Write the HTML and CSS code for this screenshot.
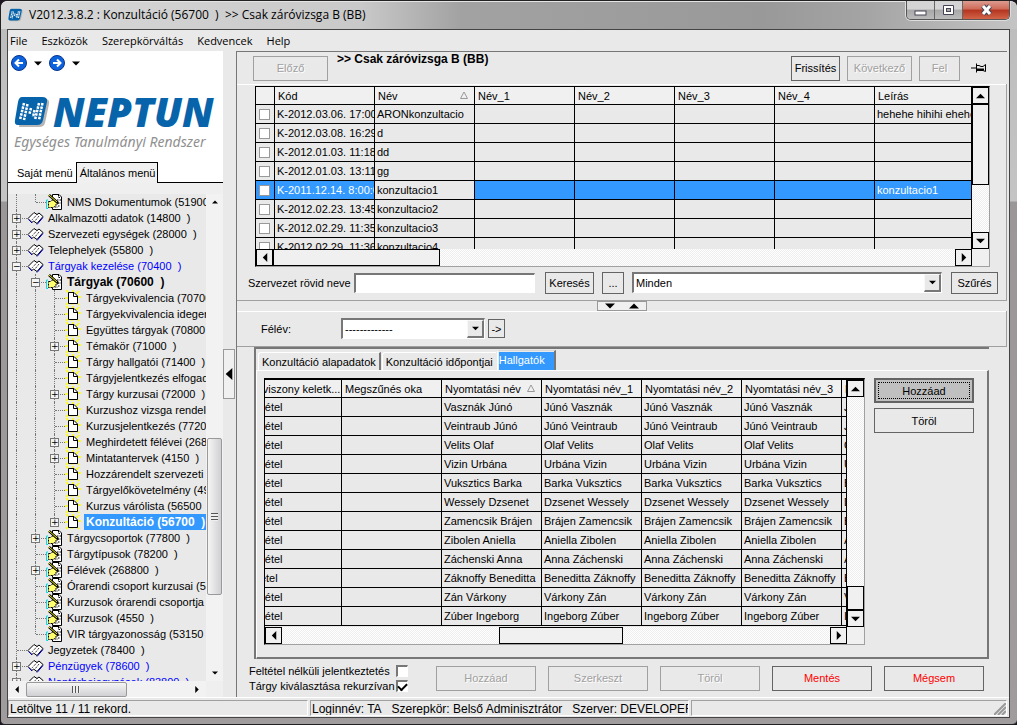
FILE: index.html
```html
<!DOCTYPE html>
<html lang="hu">
<head>
<meta charset="utf-8">
<title>V2012.3.8.2 : Konzultáció (56700)</title>
<link rel="stylesheet" href="styles.css">
</head>
<body>
<svg class="defs" aria-hidden="true">
  <symbol id="book" viewBox="0 0 17 16"><path d="M1 8.500L7 2.500L10 4.500L12 3L16 6.500L10 13.500L6.500 11L5 12.500Z" fill="#fff" stroke="#000"/><path d="M10 4.500L4.500 10.500M12 6L8 11" stroke="#000" stroke-dasharray="1 1" fill="none"/><path d="M1.500 9.500L5 13M10 14.500L16 7.500" fill="none" stroke="#0000d0"/></symbol>
  <symbol id="page" viewBox="0 0 17 16"><path d="M1 0L4 3M8 0V2M14 1L11 4M0 8H3M16 7H12M1 15L4 12M14 15L11 12M7 15V13" stroke="#ff0" stroke-width="1.500"/><path d="M3.500 2.500H9L12.500 6V13.500H3.500Z" fill="#fff" stroke="#000"/><path d="M8.500 2.500V6.500H12.500" fill="none" stroke="#000"/></symbol>
  <symbol id="form" viewBox="0 0 17 16"><path d="M6.500 0.500H13L15.500 3V15.500H6.500Z" fill="#fff" stroke="#000"/><path d="M12.500 1V3.500H15M11 6H15M12 9H15M9 13H12M12 12H14" fill="none" stroke="#000" stroke-dasharray="1.500 1"/><path d="M2.500 7.500H5L7 5.500L10 8H12V10H10V12L7 13.500H2.500Z" fill="#ffff70" stroke="#000" stroke-dasharray="2 1"/><path d="M3 9H9V12H3Z" fill="#ffff70"/><path d="M2 6H0.500V14.500H2" fill="none" stroke="#0dd"/><path d="M3 1L12 9" stroke="#000" stroke-width="2.500"/><path d="M3 1L11 8" stroke="#ee0"/></symbol>
  <symbol id="up" viewBox="0 0 10 6"><path d="M0 5.500L5 0.500L10 5.500Z"/></symbol>
  <symbol id="down" viewBox="0 0 10 6"><path d="M0 0.500H10L5 5.500Z"/></symbol>
  <symbol id="left" viewBox="0 0 6 10"><path d="M5.500 0V10L0.500 5Z"/></symbol>
  <symbol id="right" viewBox="0 0 6 10"><path d="M0.500 0V10L5.500 5Z"/></symbol>
  <symbol id="sort" viewBox="0 0 8 9"><path d="M0.500 7.500L4 1L7.500 7.500Z" fill="none" stroke="#999"/></symbol>
  <symbol id="neptun" viewBox="0 0 36 32"><path d="M10 3H31Q36 3 35 8L31 27Q30 31 25 31H5Z" fill="#b5b5b5"/><path d="M8 1H28Q34 1 33 6L29 24Q28 29 23 29H4Q0 29 1 24L4 6Q5 1 8 1Z" fill="#0864aa"/><path d="M10 7L6 24M13.500 8L10 24M17 12L15.500 18M20.500 14L19 21M25 7L21 24M28.500 7L25 24" stroke="#fff" stroke-width="2.500" stroke-dasharray="2.500 1"/></symbol>
</svg>

<header class="titlebar">
  <svg class="appicon" viewBox="0 0 36 32"><use href="#neptun"/></svg>
  <span class="caption">V2012.3.8.2 : Konzultáció (56700&nbsp; )&nbsp; &gt;&gt; Csak záróvizsga B (BB)</span>
  <div class="winbtns">
    <button aria-label="Kis méret"><svg width="13" height="13"><rect x="1" y="7" width="11" height="4" fill="#fff" stroke="#444455"/></svg></button>
    <button aria-label="Teljes méret"><svg width="13" height="13"><path d="M1.500 1.500H11.500V10.500H1.500Z" fill="#fff" stroke="#444455"/><rect x="4.500" y="4.500" width="4" height="3" fill="#aaa" stroke="#444455"/></svg></button>
    <button class="close" aria-label="Bezárás"><svg width="13" height="12"><path d="M3 2L10 10M10 2L3 10" stroke="#445" stroke-width="5"/><path d="M3 2L10 10M10 2L3 10" stroke="#fff" stroke-width="3"/></svg></button>
  </div>
</header>

<div class="client">
  <nav class="menubar"><button>File</button><button>Eszközök</button><button>Szerepkörváltás</button><button>Kedvencek</button><button>Help</button></nav>

  <div class="main">
    <aside class="side">
      <div class="brand">
        <div class="history">
          <button aria-label="Vissza"><svg width="16" height="16"><circle cx="8" cy="8" r="7.500" fill="#0c62dc" stroke="#08348c"/><path d="M12 8H5M8 4.500L4.500 8L8 11.500" fill="none" stroke="#fff" stroke-width="2"/></svg></button>
          <svg class="drop"><use href="#down"/></svg>
          <button aria-label="Előre"><svg width="16" height="16"><circle cx="8" cy="8" r="7.500" fill="#0c62dc" stroke="#08348c"/><path d="M4 8H11M8 4.500L11.500 8L8 11.500" fill="none" stroke="#fff" stroke-width="2"/></svg></button>
          <svg class="drop"><use href="#down"/></svg>
        </div>
        <div class="logo"><svg width="36" height="32"><use href="#neptun"/></svg><span>NEPTUN</span></div>
        <div class="tagline">Egységes Tanulmányi Rendszer</div>
        <div class="sidetabs"><button>Saját menü</button><button class="on">Általános menü</button><i></i></div>
      </div>
      <div class="treebox">
        <div class="tree">
          <div class="n"><i class="v"></i><i class="l"></i><svg><use href="#form"/></svg><span>NMS Dokumentumok (51900&nbsp; )</span></div>
          <div class="n"><i class="t"><button>+</button></i><svg><use href="#book"/></svg><span>Alkalmazotti adatok (14800&nbsp; )</span></div>
          <div class="n"><i class="t"><button>+</button></i><svg><use href="#book"/></svg><span>Szervezeti egységek (28000&nbsp; )</span></div>
          <div class="n"><i class="t"><button>+</button></i><svg><use href="#book"/></svg><span>Telephelyek (55800&nbsp; )</span></div>
          <div class="n blue"><i class="t"><button>−</button></i><svg><use href="#book"/></svg><span>Tárgyak kezelése (70400&nbsp; )</span></div>
          <div class="n bold"><i class="v"></i><i class="t"><button>−</button></i><svg><use href="#form"/></svg><span>Tárgyak (70600&nbsp; )</span></div>
          <div class="n"><i class="v"></i><i class="v"></i><i class="t"></i><svg><use href="#page"/></svg><span>Tárgyekvivalencia (70700&nbsp; )</span></div>
          <div class="n"><i class="v"></i><i class="v"></i><i class="t"></i><svg><use href="#page"/></svg><span>Tárgyekvivalencia idegen</span></div>
          <div class="n"><i class="v"></i><i class="v"></i><i class="t"></i><svg><use href="#page"/></svg><span>Együttes tárgyak (70800&nbsp; )</span></div>
          <div class="n"><i class="v"></i><i class="v"></i><i class="t"><button>+</button></i><svg><use href="#page"/></svg><span>Témakör (71000&nbsp; )</span></div>
          <div class="n"><i class="v"></i><i class="v"></i><i class="t"></i><svg><use href="#page"/></svg><span>Tárgy hallgatói (71400&nbsp; )</span></div>
          <div class="n"><i class="v"></i><i class="v"></i><i class="t"></i><svg><use href="#page"/></svg><span>Tárgyjelentkezés elfogadás</span></div>
          <div class="n"><i class="v"></i><i class="v"></i><i class="t"><button>+</button></i><svg><use href="#page"/></svg><span>Tárgy kurzusai (72000&nbsp; )</span></div>
          <div class="n"><i class="v"></i><i class="v"></i><i class="t"></i><svg><use href="#page"/></svg><span>Kurzushoz vizsga rendelés</span></div>
          <div class="n"><i class="v"></i><i class="v"></i><i class="t"></i><svg><use href="#page"/></svg><span>Kurzusjelentkezés (77200&nbsp; )</span></div>
          <div class="n"><i class="v"></i><i class="v"></i><i class="t"><button>+</button></i><svg><use href="#page"/></svg><span>Meghirdetett félévei (26860</span></div>
          <div class="n"><i class="v"></i><i class="v"></i><i class="t"><button>+</button></i><svg><use href="#page"/></svg><span>Mintatantervek (4150&nbsp; )</span></div>
          <div class="n"><i class="v"></i><i class="v"></i><i class="t"></i><svg><use href="#page"/></svg><span>Hozzárendelt szervezeti eg</span></div>
          <div class="n"><i class="v"></i><i class="v"></i><i class="t"></i><svg><use href="#page"/></svg><span>Tárgyelőkövetelmény (4980</span></div>
          <div class="n"><i class="v"></i><i class="v"></i><i class="t"></i><svg><use href="#page"/></svg><span>Kurzus várólista (56500&nbsp; )</span></div>
          <div class="n bold sel"><i class="v"></i><i class="v"></i><i class="l"><button>+</button></i><svg><use href="#page"/></svg><span>Konzultáció (56700&nbsp; )</span></div>
          <div class="n"><i class="v"></i><i class="t"><button>+</button></i><svg><use href="#form"/></svg><span>Tárgycsoportok (77800&nbsp; )</span></div>
          <div class="n"><i class="v"></i><i class="t"></i><svg><use href="#form"/></svg><span>Tárgytípusok (78200&nbsp; )</span></div>
          <div class="n"><i class="v"></i><i class="t"><button>+</button></i><svg><use href="#form"/></svg><span>Félévek (268800&nbsp; )</span></div>
          <div class="n"><i class="v"></i><i class="t"></i><svg><use href="#form"/></svg><span>Órarendi csoport kurzusai (5500</span></div>
          <div class="n"><i class="v"></i><i class="t"></i><svg><use href="#form"/></svg><span>Kurzusok órarendi csoportja (8</span></div>
          <div class="n"><i class="v"></i><i class="t"></i><svg><use href="#form"/></svg><span>Kurzusok (4550&nbsp; )</span></div>
          <div class="n"><i class="v"></i><i class="l"></i><svg><use href="#form"/></svg><span>VIR tárgyazonosság (53150&nbsp; )</span></div>
          <div class="n"><i class="t"></i><svg><use href="#book"/></svg><span>Jegyzetek (78400&nbsp; )</span></div>
          <div class="n blue"><i class="t"><button>+</button></i><svg><use href="#book"/></svg><span>Pénzügyek (78600&nbsp; )</span></div>
          <div class="n blue"><i class="t"><button>+</button></i><svg><use href="#book"/></svg><span>Naptárbejegyzések (83800&nbsp; )</span></div>
        </div>
        <div class="softv"><svg class="sm"><use href="#up"/></svg><div class="room"></div><div class="knob"><b></b></div><div class="rest"></div><svg class="sm"><use href="#down"/></svg></div>
        <div class="softh"><svg class="sm"><use href="#left"/></svg><div class="knob"><b></b></div><div class="room"></div><svg class="sm"><use href="#right"/></svg></div>
      </div>
    </aside>

    <div class="splitter"><button aria-label="Menü elrejtése"><svg width="8" height="12" viewBox="0 0 6 10" preserveAspectRatio="none"><use href="#left"/></svg></button></div>

    <main class="content">
      <div class="topbar">
        <button class="btn wide" disabled>Előző</button>
        <h1>&gt;&gt; Csak záróvizsga B (BB)</h1>
        <button class="btn refresh">Frissítés</button>
        <button class="btn next" disabled>Következő</button>
        <button class="btn level" disabled>Fel</button>
        <svg class="pin" width="16" height="12"><path d="M0 6H5M5.500 1.500V10.500M6 3.500H8L10 4.500H12L14.500 2.500V9.500L12 8.500H6" fill="none" stroke="#000"/><path d="M6 7.500H13" stroke="#000" stroke-width="2"/></svg>
      </div>

      <section class="listing">
        <div class="grid first">
          <div class="view">
            <table>
              <colgroup><col class="c0"><col class="c"><col class="c"><col class="c"><col class="c"><col class="c"><col class="c"><col></colgroup>
              <thead><tr><th></th><th>Kód</th><th>Név<svg class="sort"><use href="#sort"/></svg></th><th>Név_1</th><th>Név_2</th><th>Név_3</th><th>Név_4</th><th>Leírás</th></tr></thead>
              <tbody>
                <tr><td><input type="checkbox" aria-label="ARONkonzultacio"></td><td>K-2012.03.06. 17:00</td><td>ARONkonzultacio</td><td></td><td></td><td></td><td></td><td>hehehe hihihi ehehe</td></tr>
                <tr><td><input type="checkbox" aria-label="d"></td><td>K-2012.03.08. 16:29</td><td>d</td><td></td><td></td><td></td><td></td><td></td></tr>
                <tr><td><input type="checkbox" aria-label="dd"></td><td>K-2012.01.03. 11:18</td><td>dd</td><td></td><td></td><td></td><td></td><td></td></tr>
                <tr><td><input type="checkbox" aria-label="gg"></td><td>K-2012.01.03. 13:11</td><td>gg</td><td></td><td></td><td></td><td></td><td></td></tr>
                <tr class="picked"><td><input type="checkbox" aria-label="konzultacio1"></td><td>K-2011.12.14. 8:00:0</td><td class="plain">konzultacio1</td><td></td><td></td><td></td><td></td><td>konzultacio1</td></tr>
                <tr><td><input type="checkbox" aria-label="konzultacio2"></td><td>K-2012.02.23. 13:45</td><td>konzultacio2</td><td></td><td></td><td></td><td></td><td></td></tr>
                <tr><td><input type="checkbox" aria-label="konzultacio3"></td><td>K-2012.02.29. 11:35</td><td>konzultacio3</td><td></td><td></td><td></td><td></td><td></td></tr>
                <tr><td><input type="checkbox" aria-label="konzultacio4"></td><td>K-2012.02.29. 11:36</td><td>konzultacio4</td><td></td><td></td><td></td><td></td><td></td></tr>
              </tbody>
            </table>
          </div>
          <div class="vbar"><button aria-label="Fel"><svg class="h"><use href="#up"/></svg></button><div class="thumb"></div><div class="track"></div><button aria-label="Le"><svg class="h"><use href="#down"/></svg></button></div>
          <div class="hbar"><button aria-label="Balra"><svg class="w"><use href="#left"/></svg></button><div class="thumb"></div><div class="track"></div><button aria-label="Jobbra"><svg class="w"><use href="#right"/></svg></button></div>
        </div>
        <form class="search">
          <label for="org">Szervezet rövid neve</label>
          <input id="org" class="text" type="text">
          <button type="button" class="btn find">Keresés</button>
          <button type="button" class="btn dots">...</button>
          <div class="combo grow"><select aria-label="Szűrő"><option>Minden</option></select><span><svg class="arrow"><use href="#down"/></svg></span></div>
          <button type="button" class="btn filter">Szűrés</button>
        </form>
      </section>

      <div class="hsplit"><button aria-label="Elválasztó"><svg class="tri"><use href="#down"/></svg><svg class="tri"><use href="#up"/></svg></button></div>

      <section class="term">
        <label for="term">Félév:</label>
        <div class="combo"><select id="term"><option>-------------</option></select><span><svg class="arrow"><use href="#down"/></svg></span></div>
        <button class="btn go">-&gt;</button>
      </section>

      <section class="tabs">
        <div class="tabrow"><button>Konzultáció alapadatok</button><button>Konzultáció időpontjai</button><button class="on"><span>Hallgatók</span></button></div>
        <div class="tabbody">
          <div class="grid second">
            <div class="view">
              <table>
                <colgroup><col class="c"><col class="c"><col class="c"><col class="c"><col class="c"><col class="c"><col class="c"></colgroup>
                <thead><tr><th>Jogviszony keletk...</th><th>Megszűnés oka</th><th>Nyomtatási név<svg class="sort"><use href="#sort"/></svg></th><th>Nyomtatási név_1</th><th>Nyomtatási név_2</th><th>Nyomtatási név_3</th><th>Nyomtatási név_4</th></tr></thead>
                <tbody>
                  <tr><td>Felvétel</td><td></td><td>Vasznák Júnó</td><td>Júnó Vasznák</td><td>Júnó Vasznák</td><td>Júnó Vasznák</td><td>Júnó Vasznák</td></tr>
                  <tr><td>Felvétel</td><td></td><td>Veintraub Júnó</td><td>Júnó Veintraub</td><td>Júnó Veintraub</td><td>Júnó Veintraub</td><td>Júnó Veintraub</td></tr>
                  <tr><td>Felvétel</td><td></td><td>Velits Olaf</td><td>Olaf Velits</td><td>Olaf Velits</td><td>Olaf Velits</td><td>Olaf Velits</td></tr>
                  <tr><td>Felvétel</td><td></td><td>Vizin Urbána</td><td>Urbána Vizin</td><td>Urbána Vizin</td><td>Urbána Vizin</td><td>Urbána Vizin</td></tr>
                  <tr><td>Felvétel</td><td></td><td>Vuksztics Barka</td><td>Barka Vuksztics</td><td>Barka Vuksztics</td><td>Barka Vuksztics</td><td>Barka Vuksztics</td></tr>
                  <tr><td>Felvétel</td><td></td><td>Wessely Dzsenet</td><td>Dzsenet Wessely</td><td>Dzsenet Wessely</td><td>Dzsenet Wessely</td><td>Dzsenet Wessely</td></tr>
                  <tr><td>Felvétel</td><td></td><td>Zamencsik Brájen</td><td>Brájen Zamencsik</td><td>Brájen Zamencsik</td><td>Brájen Zamencsik</td><td>Brájen Zamencsik</td></tr>
                  <tr><td>Felvétel</td><td></td><td>Zibolen Aniella</td><td>Aniella Zibolen</td><td>Aniella Zibolen</td><td>Aniella Zibolen</td><td>Aniella Zibolen</td></tr>
                  <tr><td>Felvétel</td><td></td><td>Záchenski Anna</td><td>Anna Záchenski</td><td>Anna Záchenski</td><td>Anna Záchenski</td><td>Anna Záchenski</td></tr>
                  <tr><td>Átvétel</td><td></td><td>Záknoffy Beneditta</td><td>Beneditta Záknoffy</td><td>Beneditta Záknoffy</td><td>Beneditta Záknoffy</td><td>Beneditta Záknoffy</td></tr>
                  <tr><td>Felvétel</td><td></td><td>Zán Várkony</td><td>Várkony Zán</td><td>Várkony Zán</td><td>Várkony Zán</td><td>Várkony Zán</td></tr>
                  <tr><td>Felvétel</td><td></td><td>Zúber Ingeborg</td><td>Ingeborg Zúber</td><td>Ingeborg Zúber</td><td>Ingeborg Zúber</td><td>Ingeborg Zúber</td></tr>
                </tbody>
              </table>
            </div>
            <div class="vbar"><button aria-label="Fel"><svg class="h"><use href="#up"/></svg></button><div class="track"></div><div class="thumb"></div><button aria-label="Le"><svg class="h"><use href="#down"/></svg></button></div>
            <div class="hbar"><button aria-label="Balra"><svg class="w"><use href="#left"/></svg></button><div class="track"></div><div class="thumb"></div><div class="track"></div><button aria-label="Jobbra"><svg class="w"><use href="#right"/></svg></button></div>
          </div>
          <div class="sidebtns"><button class="btn focus">Hozzáad</button><button class="btn">Töröl</button></div>
        </div>
      </section>

      <footer class="actions">
        <div class="checks">
          <label for="k1">Feltétel nélküli jelentkeztetés</label><input id="k1" type="checkbox">
          <label for="k2">Tárgy kiválasztása rekurzívan</label><input id="k2" type="checkbox" checked>
        </div>
        <button class="btn" disabled>Hozzáad</button><button class="btn" disabled>Szerkeszt</button><button class="btn" disabled>Töröl</button><button class="btn red">Mentés</button><button class="btn red">Mégsem</button>
      </footer>
    </main>
  </div>

  <div class="status">
    <div class="s1">Letöltve 11 / 11 rekord.</div>
    <div class="s2">Loginnév: TA&nbsp;&nbsp; Szerepkör: Belső Adminisztrátor&nbsp;&nbsp; Szerver: DEVELOPER</div>
    <div class="s3"><svg width="12" height="12"><path d="M0 12L12 0M4 12L12 4M8 12L12 8" stroke="#999" stroke-width="2"/></svg></div>
  </div>
</div>
</body>
</html>
```
FILE: styles.css
```css
* { box-sizing: border-box; }
html { height: 100%; background: #1c1420; }
body {
  margin: 0;
  height: 100%;
  display: flex;
  flex-direction: column;
  padding: 0 7px 6px 6px;
  border: 1px solid #222;
  border-width: 1px 0 1px 1px;
  border-radius: 7px 7px 5px 5px;
  background: linear-gradient(#bcbcbc 0, #c4c4c4 200px, #9b9698 201px, #a09c9e 100%);
  font: 11px/14px "Liberation Sans", Arial, sans-serif;
  color: #000;
  overflow: hidden;
}
button, input, select { font: inherit; color: inherit; margin: 0; padding: 0; border-radius: 0; }
svg { display: block; flex: none; }
.defs { position: absolute; width: 0; height: 0; }

/* window frame */
.titlebar { display: flex; height: 28px; flex: none; margin: 0 -7px 0 -6px; padding-left: 7px; align-items: center;
  background: linear-gradient(90deg, #d8d8d8 0, #c9c9c9 360px, #a2a2a2 460px, #999 75%, #a4a4a4 85%, #c4c4c4 100%); border-radius: 6px 6px 0 0; box-shadow: inset 0 1px #e4e4e4; }
.appicon { width: 15px; height: 14px; }
.caption { flex: 1; margin-left: 6px; font: 12px/16px "Open Sans", "Noto Sans", sans-serif; white-space: pre; }
.winbtns { display: flex; align-self: flex-start; margin-right: 7px; border: 1px solid #555; border-top: 0; border-radius: 0 0 5px 5px; box-shadow: 0 0 0 1px #ddd; overflow: hidden; }
.winbtns button { width: 28px; height: 18px; border: 0; border-right: 1px solid #666; display: grid; place-items: center; background: linear-gradient(#d4d4d4 45%, #a8a8a8 50%, #bbb); }
.winbtns button.close { width: 46px; border: 0; background: linear-gradient(#dc9c90 0, #cf6a58 45%, #b43420 50%, #d26448); }

.client { flex: 1; min-height: 0; display: flex; flex-direction: column; border: 1px solid #444; background: #e9e9e9; }
.menubar { display: flex; height: 21px; flex: none; padding-left: 2px; gap: 14px; }
.menubar button { border: 0; background: none; font: 11px/18px "Open Sans", "Noto Sans", sans-serif; }
.main { flex: 1; min-height: 0; display: flex; }

/* side panel */
.side { width: 215px; display: flex; flex-direction: column; }
.brand { background: #fff; }
.history { display: flex; align-items: center; height: 24px; padding-left: 3px; }
.history button { border: 0; background: none; }
.drop { width: 8px; height: 5px; margin: 0 7px; }
.logo { display: flex; height: 38px; margin: 18px 0 0 6px; align-items: center; gap: 3px; color: #0864aa; font: italic 800 40px/38px "Open Sans", "Noto Sans", sans-serif; }
.tagline { margin: 1px 0 0 6px; color: #909090; font: italic 14px/20px "Noto Sans", "Open Sans", sans-serif; white-space: nowrap; }
.sidetabs { display: flex; height: 21px; margin-top: 10px; }
.sidetabs button { border: 0; background: #fff; border-bottom: 1px solid #000; padding: 1px 3px 0 9px; white-space: nowrap; }
.sidetabs .on { border: 1px solid #000; border-bottom: 0; background: #f0f0f0; padding: 0 2px 0 3px; }
.sidetabs i { flex: 1; border-bottom: 1px solid #000; }
.treebox { flex: 1; min-height: 0; display: grid; grid-template: minmax(0, 1fr) 16px / minmax(0, 1fr) 17px; padding-top: 11px; background: #efefef; }
.tree { overflow: hidden; background: #e9e9e9; }
.n { display: flex; height: 16px; white-space: nowrap; }
.n > i { position: relative; width: 19px; flex: none; margin: 0; }
.n > i::before { content: ""; position: absolute; left: 8px; top: 0; bottom: 0; border-left: 1px dotted #777; }
.n > i.l::before { bottom: 8px; }
.n > i.t::after, .n > i.l::after { content: ""; position: absolute; left: 9px; right: 0; top: 8px; border-top: 1px dotted #777; }
.n > i button { position: absolute; z-index: 1; left: 4px; top: 4px; width: 9px; height: 9px; border: 1px solid #777; background: #f4f4f4; font: 9px/7px "DejaVu Sans", sans-serif; display: grid; place-items: center; }
.n > svg { width: 17px; height: 16px; margin-right: 2px; }
.n span { padding: 0 2px; line-height: 16px; }
.n.bold span { font: bold 12px/16px "Liberation Sans", Arial, sans-serif; }
.blue span { color: #0000ff; }
.sel span { background: #3399ff; color: #fff; flex: 1; }
.softv { display: flex; flex-direction: column; align-items: center; background: #f2f2f2; }
.softh { display: flex; align-items: center; background: #f2f2f2; }
.softv .sm { width: 6px; height: 16px; }
.softh .sm { width: 18px; height: 7px; }
.softv .room { flex: 229; }
.softv .rest { flex: 70; }
.softv .knob { flex: 156; width: 15px; border: 1px solid #999; border-radius: 2px; background: linear-gradient(90deg, #f5f5f5, #d0d0d4); display: grid; place-items: center; }
.softh .knob { flex: 100; height: 15px; border: 1px solid #999; border-radius: 2px; background: linear-gradient(#f5f5f5, #d0d0d4); display: grid; place-items: center; }
.softh .room { flex: 62; }
.softv b { width: 7px; height: 8px; background: repeating-linear-gradient(#555 0 1px, #eee 1px 3px); }
.softh b { width: 8px; height: 7px; background: repeating-linear-gradient(90deg, #555 0 1px, #eee 1px 3px); }
.splitter { width: 13px; display: flex; align-items: center; }
.splitter button { width: 12px; height: 50px; border: 1px solid #999; background: #f0f0f0; display: grid; place-items: center; }

/* shared controls */
.btn { border: 1px solid #646464; background: #e9e9e9; height: 25px; text-align: center; }
.btn:disabled { border-color: #a0a0a0; color: #a0a0a0; text-shadow: 1px 1px #fff; }
.content { flex: 1; min-width: 0; display: flex; flex-direction: column; border-left: 1px solid #777; border-top: 1px solid #777; margin-right: 2px; }
.topbar { display: flex; height: 32px; flex: none; align-items: center; padding: 0 20px 0 16px; }
.topbar .wide { width: 75px; }
.topbar h1 { flex: 1; align-self: flex-start; margin: 0 0 0 9px; font: bold 12px/14px "Liberation Sans", Arial, sans-serif; }
.refresh { width: 49px; }
.next { width: 65px; margin: 0 7px; }
.level { width: 41px; }
.pin { margin-left: 11px; }
.listing { border: 1px solid #a0a0a0; border-width: 0 1px 1px 0; box-shadow: inset 0 1px #fff; padding-top: 2px; }

.grid { display: grid; grid-template: minmax(0, 1fr) 17px / minmax(0, 1fr) 17px; border: 1px solid #a0a0a0; border-color: #000 #a0a0a0 #a0a0a0 #000; background: #f0f0f0; }
.first { height: 181px; margin: 0 16px 0 18px; }
.view { overflow: hidden; border-right: 1px solid #000; background: #e9e9e9; }
table { border-collapse: separate; border-spacing: 0; table-layout: fixed; width: 100%; }
.c0 { width: 19px; }
.c { width: 100px; }
th, td { height: 19px; padding: 0 0 0 2px; border-right: 1px solid #000; border-bottom: 1px solid #000; text-align: left; font-weight: normal; white-space: nowrap; overflow: hidden; line-height: 16px; }
th { height: 18px; padding-left: 3px; background: #f0f0f0; position: relative; }
.first th:last-child, .first td:last-child { border-right: 0; }
.sort { position: absolute; right: 6px; top: 4px; width: 8px; height: 9px; }
.picked td { background: #3399ff; color: #fff; }
.picked .plain { background: #e9e9e9; color: #000; }
td input { appearance: none; display: block; width: 11px; height: 11px; border: 1px solid #999; background: #fff; margin: 0 0 0 1px; }
.vbar { display: flex; flex-direction: column; }
.hbar { display: flex; }
.vbar button, .hbar button { width: 17px; height: 17px; flex: none; border: 1px solid #000; background: #f0f0f0; display: grid; place-items: center; }
.vbar .thumb, .hbar .thumb { border: 1px solid #000; background: #f0f0f0; }
.track { background: repeating-conic-gradient(#fff 0 25%, #eee 0 50%) 0 0 / 2px 2px; }
.first .vbar .thumb { flex: 81; }
.first .vbar .track { flex: 48; }
.first .hbar .thumb { flex: 166; }
.first .hbar .track { flex: 517; }
.h { width: 9px; height: 6px; }
.w { width: 6px; height: 9px; }
.arrow { width: 7px; height: 5px; }

.search { display: flex; align-items: center; height: 33px; padding: 0 8px 2px 11px; }
.search label { width: 106px; white-space: nowrap; }
.search .btn { height: 22px; }
.text { width: 181px; height: 20px; border: 1px solid #fff; border-top: 2px solid #777; border-left: 2px solid #777; background: #fff; margin-right: 10px; }
.find { width: 49px; margin-right: 8px; }
.dots { width: 22px; margin-right: 8px; }
.filter { width: 47px; margin-left: 9px; }
.combo { position: relative; height: 21px; border: 1px solid #fff; border-top: 2px solid #777; border-left: 2px solid #777; background: #fff; }
.combo.grow { flex: 1; }
.combo select { appearance: none; width: 100%; height: 100%; border: 0; padding-left: 2px; background: #fff; display: block; }
.combo span { position: absolute; right: 0; top: 0; bottom: 0; width: 17px; border: 1px solid #f8f8f8; border-right: 2px solid #777; border-bottom: 2px solid #777; background: #e9e9e9; display: grid; place-items: center; pointer-events: none; }

.hsplit { height: 10px; flex: none; display: flex; justify-content: center; }
.hsplit button { width: 50px; border: 1px solid #999; background: #f0f0f0; display: flex; align-items: center; justify-content: center; gap: 12px; }
.tri { width: 12px; height: 6px; }
.term { display: flex; height: 36px; flex: none; align-items: center; padding-left: 24px; border: 1px solid #a0a0a0; border-width: 0 1px 1px 0; box-shadow: inset 0 1px #fff; }
.term label { width: 80px; }
.term .combo { width: 144px; margin-right: 3px; }
.term .go { width: 17px; height: 19px; }

/* tab pages */
.tabs { flex: 1; min-height: 0; display: flex; flex-direction: column; margin: 0 18px 0 17px; border: 2px solid #777; border-width: 2px 0 0 2px; padding-top: 2px; }
.tabrow { display: flex; align-items: flex-end; flex: none; height: 19px; padding-left: 2px; gap: 1px; }
.tabrow button { height: 18px; border: 1px solid #fff; border-bottom: 0; border-right: 2px solid #777; background: #e9e9e9; padding: 0 3px; white-space: nowrap; border-radius: 3px 0 0 0; }
.tabrow button:nth-child(2) { border-right: 0; }
.tabrow .on { height: 20px; padding: 0; width: 59px; text-align: left; border-top-color: #d8d8d8; }
.tabrow .on span { display: block; height: 18px; background: #3399ff; color: #fff; line-height: 16px; margin-left: 1px; }
.tabbody { flex: 1; min-height: 0; display: flex; gap: 9px; align-items: flex-start; padding: 7px 13px 12px 7px; border: 1px solid #fff; border-right: 2px solid #777; border-bottom: 2px solid #777; }
.second { flex: 1; align-self: stretch; border-top-width: 2px; }
.second table { width: 700px; margin-left: -23px; }
.second .vbar .track { flex: 193; }
.second .vbar .thumb { flex: 23; }
.second .hbar .track:nth-child(2) { flex: 218; }
.second .hbar .thumb { flex: 122; }
.second .hbar .track:nth-child(4) { flex: 208; }
.sidebtns { display: grid; gap: 5px; width: 100px; }
.focus { border: 2px solid #646464; background: #c0c0c0; outline: 1px dotted #000; outline-offset: -5px; }

.actions { display: flex; flex: none; height: 38px; align-items: center; gap: 12px; padding: 0 23px 0 12px; }
.actions .btn { width: 100px; }
.checks { display: grid; grid-template-columns: 145px 12px; gap: 3px 2px; align-items: center; margin-right: auto; white-space: nowrap; line-height: 12px; }
.checks input { appearance: none; width: 12px; height: 12px; border: 1px solid #fff; border-top: 2px solid #777; border-left: 2px solid #777; background: #fff; display: grid; place-items: center; }
.checks input:checked::before { content: ""; width: 7px; height: 4px; border: solid #000; border-width: 0 0 2px 2px; transform: rotate(-45deg); }
.red { color: #f00; }

.status { display: flex; flex: none; height: 20px; gap: 2px; padding: 2px 2px 1px 0; border-top: 1px solid #fff; font: 12px/16px "Liberation Sans", Arial, sans-serif; white-space: nowrap; }
.status div { border: 1px solid #a0a0a0; border-color: #a0a0a0 #fff #fff #a0a0a0; padding-left: 1px; overflow: hidden; }
.s1 { width: 300px; }
.s2 { width: 379px; }
.s3 { flex: 1; display: flex; align-items: flex-end; justify-content: flex-end; }
```
